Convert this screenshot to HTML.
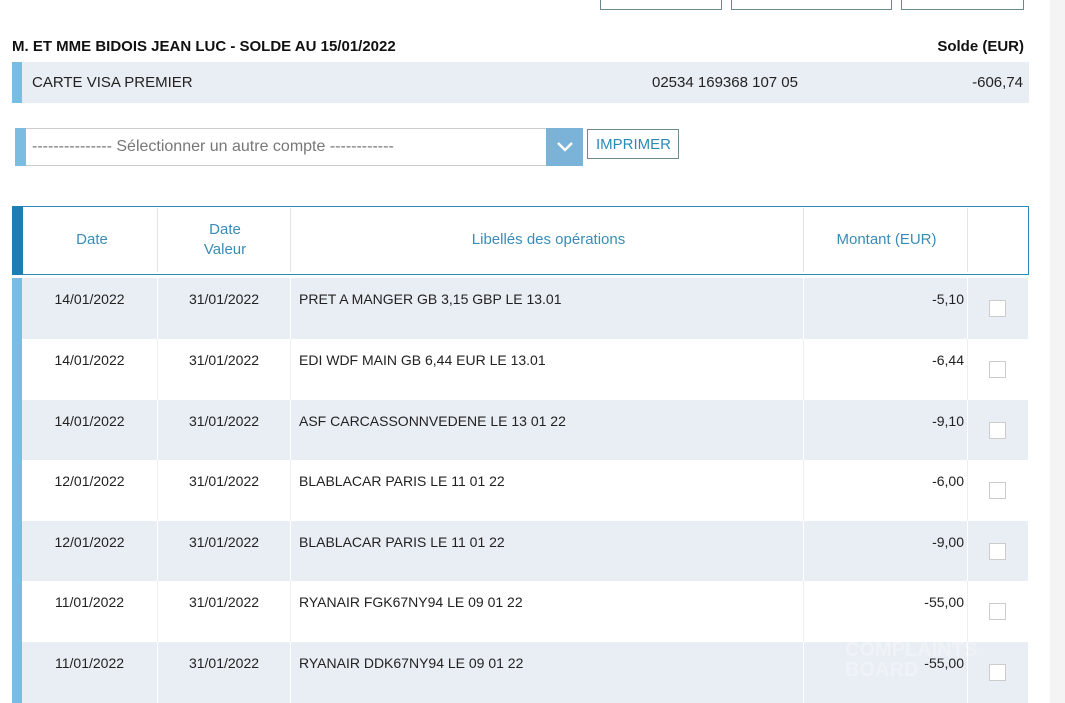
<!DOCTYPE html>
<html><head><meta charset="utf-8"><style>
*{margin:0;padding:0;box-sizing:border-box}
body{width:1065px;height:703px;overflow:hidden;background:#fff;font-family:"Liberation Sans",Arial,sans-serif;font-size:14px;color:#222;position:relative}
.abs{position:absolute}
.btn{position:absolute;top:-10px;height:20px;border:1px solid #6a8a90;background:#fff}
.row{position:absolute;left:12px;width:1016px;height:61px}
.row .bar{position:absolute;left:0;top:0;bottom:0;width:10px;background:#7bbde0}
.c{position:absolute;top:0;height:100%}
.row .c{padding-top:13px}
.cb{position:absolute;left:977px;width:17px;height:17px;border:1px solid #ccc;background:#fff;top:22px}
</style></head><body>
<div class="abs" style="left:1050px;top:0;width:15px;height:703px;background:#f4f4f4"></div>
<div class="btn" style="left:600px;width:122px"></div>
<div class="btn" style="left:731px;width:161px"></div>
<div class="btn" style="left:901px;width:123px"></div>

<div class="abs" style="left:12px;top:38px;font-weight:bold;font-size:15px;color:#111">M. ET MME BIDOIS JEAN LUC - SOLDE AU 15/01/2022</div>
<div class="abs" style="right:41px;top:38px;font-weight:bold;font-size:15px;color:#111">Solde (EUR)</div>
<div class="abs" style="left:12px;top:62px;width:1017px;height:41px;background:#e9eef4"></div>
<div class="abs" style="left:12px;top:62px;width:10px;height:41px;background:#7bbde0"></div>
<div class="abs" style="left:32px;top:74px;font-size:15px">CARTE VISA PREMIER</div>
<div class="abs" style="left:652px;top:74px;font-size:15px">02534 169368 107 05</div>
<div class="abs" style="right:42px;top:74px;font-size:15px">-606,74</div>

<div class="abs" style="left:15px;top:128px;width:568px;height:38px;border:1px solid #ccc;background:#fff"></div>
<div class="abs" style="left:15px;top:128px;width:11px;height:38px;background:#7bbde0"></div>
<div class="abs" style="left:32px;top:138px;font-size:16px;color:#777">--------------- Sélectionner un autre compte ------------</div>
<div class="abs" style="left:546px;top:128px;width:37px;height:38px;background:#7bb3d8"></div>
<svg class="abs" style="left:556px;top:140px" width="18" height="12"><path d="M2 3 L9 10 L16 3" stroke="#fff" stroke-width="2.5" fill="none"/></svg>
<div class="abs" style="left:587px;top:129px;width:92px;height:30px;border:1px solid #6a8a90;color:#2a8ab8;font-size:15px;padding:6px 0 0 8px">IMPRIMER</div>

<div class="abs" style="left:12px;top:206px;width:1017px;height:69px;border:1px solid #2a8ab8;border-left:none;background:#fff"></div>
<div class="abs" style="left:12px;top:206px;width:11px;height:69px;background:#1b7fb5"></div>
<div class="abs" style="left:157px;top:208px;width:1px;height:64px;background:#e4e4e4"></div>
<div class="abs" style="left:290px;top:208px;width:1px;height:64px;background:#e4e4e4"></div>
<div class="abs" style="left:803px;top:208px;width:1px;height:64px;background:#e4e4e4"></div>
<div class="abs" style="left:967px;top:208px;width:1px;height:64px;background:#e4e4e4"></div>
<div class="abs" style="left:22px;width:140px;top:231px;text-align:center;color:#3a8cb8;font-size:15px">Date</div>
<div class="abs" style="left:157px;width:136px;top:220px;text-align:center;color:#3a8cb8;line-height:20px;font-size:15px">Date<br>Valeur</div>
<div class="abs" style="left:290px;width:517px;top:231px;text-align:center;color:#3a8cb8;font-size:15px">Libellés des opérations</div>
<div class="abs" style="left:803px;width:167px;top:231px;text-align:center;color:#3a8cb8;font-size:15px">Montant (EUR)</div>

<div class="row" style="top:278px;background:#e9eef4"><div class="bar"></div><div class="c" style="left:10px;width:135px;text-align:center">14/01/2022</div><div class="c" style="left:145px;width:133px;text-align:center;border-left:1px solid #fff">31/01/2022</div><div class="c" style="left:278px;padding-left:8px;border-left:1px solid #fff;width:513px">PRET A MANGER GB 3,15 GBP LE 13.01</div><div class="c" style="left:791px;width:164px;border-left:1px solid #fff;text-align:right;padding-right:3px">-5,10</div><div class="c" style="left:955px;width:61px;border-left:1px solid #fff"></div><div class="cb"></div></div>
<div class="row" style="top:339px;background:#fff"><div class="bar"></div><div class="c" style="left:10px;width:135px;text-align:center">14/01/2022</div><div class="c" style="left:145px;width:133px;text-align:center;border-left:1px solid #eee">31/01/2022</div><div class="c" style="left:278px;padding-left:8px;border-left:1px solid #eee;width:513px">EDI WDF MAIN GB 6,44 EUR LE 13.01</div><div class="c" style="left:791px;width:164px;border-left:1px solid #eee;text-align:right;padding-right:3px">-6,44</div><div class="c" style="left:955px;width:61px;border-left:1px solid #eee"></div><div class="cb"></div></div>
<div class="row" style="top:400px;background:#e9eef4"><div class="bar"></div><div class="c" style="left:10px;width:135px;text-align:center">14/01/2022</div><div class="c" style="left:145px;width:133px;text-align:center;border-left:1px solid #fff">31/01/2022</div><div class="c" style="left:278px;padding-left:8px;border-left:1px solid #fff;width:513px">ASF CARCASSONNVEDENE LE 13 01 22</div><div class="c" style="left:791px;width:164px;border-left:1px solid #fff;text-align:right;padding-right:3px">-9,10</div><div class="c" style="left:955px;width:61px;border-left:1px solid #fff"></div><div class="cb"></div></div>
<div class="row" style="top:460px;background:#fff"><div class="bar"></div><div class="c" style="left:10px;width:135px;text-align:center">12/01/2022</div><div class="c" style="left:145px;width:133px;text-align:center;border-left:1px solid #eee">31/01/2022</div><div class="c" style="left:278px;padding-left:8px;border-left:1px solid #eee;width:513px">BLABLACAR PARIS LE 11 01 22</div><div class="c" style="left:791px;width:164px;border-left:1px solid #eee;text-align:right;padding-right:3px">-6,00</div><div class="c" style="left:955px;width:61px;border-left:1px solid #eee"></div><div class="cb"></div></div>
<div class="row" style="top:521px;background:#e9eef4"><div class="bar"></div><div class="c" style="left:10px;width:135px;text-align:center">12/01/2022</div><div class="c" style="left:145px;width:133px;text-align:center;border-left:1px solid #fff">31/01/2022</div><div class="c" style="left:278px;padding-left:8px;border-left:1px solid #fff;width:513px">BLABLACAR PARIS LE 11 01 22</div><div class="c" style="left:791px;width:164px;border-left:1px solid #fff;text-align:right;padding-right:3px">-9,00</div><div class="c" style="left:955px;width:61px;border-left:1px solid #fff"></div><div class="cb"></div></div>
<div class="row" style="top:581px;background:#fff"><div class="bar"></div><div class="c" style="left:10px;width:135px;text-align:center">11/01/2022</div><div class="c" style="left:145px;width:133px;text-align:center;border-left:1px solid #eee">31/01/2022</div><div class="c" style="left:278px;padding-left:8px;border-left:1px solid #eee;width:513px">RYANAIR FGK67NY94 LE 09 01 22</div><div class="c" style="left:791px;width:164px;border-left:1px solid #eee;text-align:right;padding-right:3px">-55,00</div><div class="c" style="left:955px;width:61px;border-left:1px solid #eee"></div><div class="cb"></div></div>
<div class="row" style="top:642px;background:#e9eef4"><div class="bar"></div><div class="c" style="left:10px;width:135px;text-align:center">11/01/2022</div><div class="c" style="left:145px;width:133px;text-align:center;border-left:1px solid #fff">31/01/2022</div><div class="c" style="left:278px;padding-left:8px;border-left:1px solid #fff;width:513px">RYANAIR DDK67NY94 LE 09 01 22</div><div class="c" style="left:791px;width:164px;border-left:1px solid #fff;text-align:right;padding-right:3px">-55,00</div><div class="c" style="left:955px;width:61px;border-left:1px solid #fff"></div><div class="cb"></div></div>
<div class="abs" style="left:845px;top:640px;color:rgba(255,255,255,.3);font-weight:bold;font-size:20px;line-height:20px">COMPLAINTS<br>BOARD</div>
</body></html>
